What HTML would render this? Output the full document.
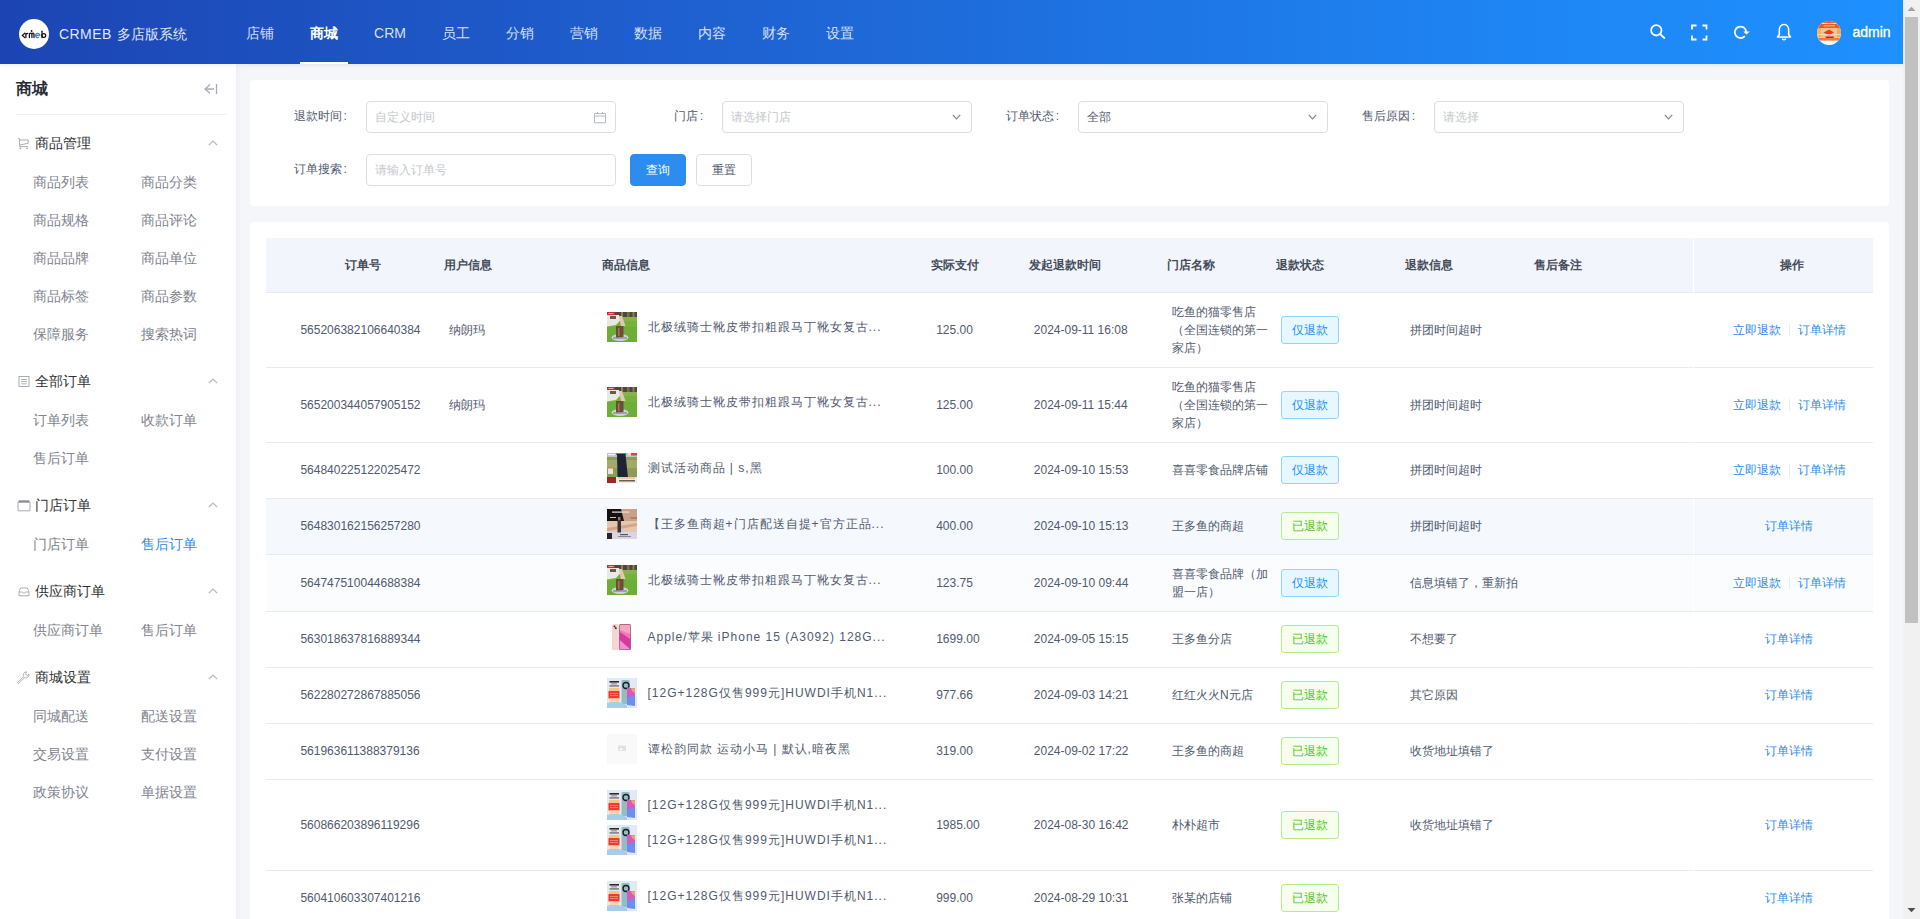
<!DOCTYPE html><html><head><meta charset="utf-8"><title>CRMEB</title><style>
*{margin:0;padding:0;box-sizing:border-box}
html,body{width:1920px;height:919px;overflow:hidden}
body{font-family:"Liberation Sans",sans-serif;background:#f5f6f9;position:relative;color:#515a6e;font-size:12px}
.ab{position:absolute;white-space:nowrap}
.hdr{position:absolute;left:0;top:0;width:1903px;height:64px;z-index:5;box-shadow:0 1px 4px rgba(0,21,41,.08);background:linear-gradient(90deg,#1c45b3 0%,#1f5fcf 35%,#1e86f4 80%,#1e90ff 100%)}
.nav{position:absolute;top:2px;height:62px;line-height:62px;font-size:14px;color:rgba(255,255,255,.82);text-align:center}
.nav.on{color:#fff;font-weight:bold}
.side{position:absolute;left:0;top:64px;width:236px;height:855px;background:#fff;box-shadow:2px 0 4px rgba(0,21,41,.035)}
.gt{position:absolute;left:35px;font-size:14px;color:#303133;line-height:20px}
.si{position:absolute;font-size:14px;color:#80848e;line-height:20px}
.card{position:absolute;background:#fff;border-radius:4px}
.lbl{position:absolute;font-size:12px;color:#515a6e;line-height:16px}
.inp{position:absolute;height:32px;width:250px;border:1px solid #dcdee2;border-radius:4px;background:#fff}
.ph{position:absolute;left:7.5px;top:-0.5px;line-height:30px;font-size:12px;color:#c5c8ce}
.btn{position:absolute;height:32px;width:56px;border-radius:4px;text-align:center;line-height:30px;font-size:12px}
.th{position:absolute;font-size:12px;font-weight:bold;color:#454b59;line-height:16px}
.td{position:absolute;font-size:12px;color:#515a6e;line-height:18px;white-space:nowrap}
.pn{letter-spacing:1px}
.tag{position:absolute;width:58px;height:28px;border:1px solid;border-radius:3px;text-align:center;line-height:26px;font-size:12px}
.tb{background:#e6f7ff;border-color:#91d5ff;color:#1890ff}
.tg{background:#f6ffed;border-color:#b7eb8f;color:#52c41a}
.lk{position:absolute;font-size:12px;color:#2d8cf0;line-height:18px;white-space:nowrap}
.img{position:absolute;width:30px;height:30px;overflow:hidden}
</style></head><body>
<div class="hdr">
<div class="ab" style="left:19px;top:19px;width:30px;height:30px;border-radius:50%;background:#fff"></div>
<svg class="ab" style="left:17px;top:17px" width="34" height="34" viewBox="0 0 34 34"><g fill="none" stroke="#111" stroke-width="1.25" stroke-linecap="round"><path d="M7.8 16.2L5.4 18.4L7.8 20.6"/><path d="M8.9 20.6V16.4M8.9 17.8Q9.6 16.2 10.9 16.3"/><path d="M12.4 20.6V17.4Q12.4 16.2 13.8 16.2Q14.9 16.2 14.9 17.4V20.6M14.9 17.4Q14.9 16.2 16 16.2Q17 16.2 17 17.4V20.6"/><path d="M25 14.2V20.6"/><circle cx="26.8" cy="18.5" r="1.9"/></g><circle cx="14.6" cy="14" r="0.9" fill="#111"/><path d="M18.8 18.4H22.8A2.1 2.1 0 1 0 22 20.1" fill="none" stroke="#2d8cf0" stroke-width="1.3"/></svg>
<div class="ab" style="left:59px;top:23.5px;font-size:14px;line-height:20px;color:rgba(255,255,255,.88)"><span style="letter-spacing:0.45px">CRMEB</span><span style="margin-left:1px"> 多店版系统</span></div>
<div class="nav" style="left:228px;width:64px">店铺</div>
<div class="nav on" style="left:292px;width:64px">商城</div>
<div class="nav" style="left:356px;width:68px">CRM</div>
<div class="nav" style="left:424px;width:64px">员工</div>
<div class="nav" style="left:488px;width:64px">分销</div>
<div class="nav" style="left:552px;width:64px">营销</div>
<div class="nav" style="left:616px;width:64px">数据</div>
<div class="nav" style="left:680px;width:64px">内容</div>
<div class="nav" style="left:744px;width:64px">财务</div>
<div class="nav" style="left:808px;width:64px">设置</div>
<div class="ab" style="left:300px;top:62px;width:48px;height:2px;background:#fff"></div>
<svg class="ab" style="left:1650px;top:24px" width="16" height="15" viewBox="0 0 16 15"><circle cx="6.3" cy="6.3" r="5.2" fill="none" stroke="#fff" stroke-width="1.8" stroke-linecap="round"/><path d="M10.2 10.2 L14.3 14" fill="none" stroke="#fff" stroke-width="1.8" stroke-linecap="round"/></svg>
<svg class="ab" style="left:1691px;top:24px" width="17" height="17" viewBox="0 0 17 17"><path d="M1 5.5V1.5H5.5M11.5 1.5H15.5V5.5M15.5 11.5V15.5H11.5M5.5 15.5H1V11.5" fill="none" stroke="#fff" stroke-width="1.8"/></svg>
<svg class="ab" style="left:1732px;top:24px" width="20" height="18" viewBox="0 0 20 18"><path d="M12.8 12.04A5.7 5.7 0 1 1 14.18 7.9" fill="none" stroke="#fff" stroke-width="1.8"/><path d="M11.3 7.4H17.8L14.5 10.6Z" fill="#fff"/></svg>
<svg class="ab" style="left:1776px;top:23px" width="16" height="18" viewBox="0 0 16 18"><path d="M8 1.5C5 1.5 3.3 4 3.3 7V11.5L1.5 14H14.5L12.7 11.5V7C12.7 4 11 1.5 8 1.5Z" fill="none" stroke="#fff" stroke-width="1.6" stroke-linejoin="round"/><path d="M6.3 15.5A1.8 1.8 0 0 0 9.7 15.5" fill="none" stroke="#fff" stroke-width="1.6"/></svg>
<svg class="ab" style="left:1817px;top:21px" width="24" height="24" viewBox="0 0 24 24"><defs><clipPath id="av"><circle cx="12" cy="12" r="12"/></clipPath></defs><g clip-path="url(#av)"><rect width="24" height="24" fill="#fff"/><rect width="24" height="19.5" fill="#f7c48e"/><rect width="24" height="7" fill="#ee5634"/><rect x="4" y="2" width="16" height="1" fill="#f9d8cc"/><rect x="6.5" y="4" width="11.5" height="1.6" fill="#f6a83a"/><rect x="0" y="7" width="4" height="9" fill="#f6b458"/><rect x="20" y="7" width="4" height="9" fill="#f4a860"/><path d="M6.5 11.5L12 8.5L17 11.5L12 14.5Z" fill="#ec3a2c"/><path d="M8.5 15.5H17L16.5 17H9Z" fill="#e5121c"/><rect y="17" width="24" height="2.5" fill="#f07a4c"/><rect y="13" width="24" height="1" fill="#fae6d6" opacity=".7"/></g></svg>
<div class="ab" style="left:1852.5px;top:22px;font-size:14px;line-height:20px;color:#fff;-webkit-text-stroke:0.35px #fff">admin</div>
</div>
<div class="side">
<div class="ab" style="left:16px;top:14px;font-size:16px;line-height:22px;font-weight:bold;color:#2a2e36">商城</div>
<svg class="ab" style="left:203px;top:19px" width="15" height="12" viewBox="0 0 15 12"><path d="M7 1.5L2 6L7 10.5M2 6H11M13.5 1V11" fill="none" stroke="#a6abb8" stroke-width="1.3"/></svg>
<div class="ab" style="left:16px;top:50px;width:210px;height:1px;background:#eeeff2"></div>
</div>
<div class="gt" style="left:35px;top:132.7px;">商品管理</div>
<svg class="ab" style="left:208px;top:140px" width="10" height="6" viewBox="0 0 10 6"><path d="M0.8 5.2L5 1L9.2 5.2" fill="none" stroke="#b4b8c2" stroke-width="1.2"/></svg>
<svg class="ab" style="left:17px;top:136.5px" width="13" height="13" viewBox="0 0 13 13"><path d="M1 1.2L2.6 1.8V9.6H11M2.6 3H11.2V6.3L2.6 8" fill="none" stroke="#a0a4ad" stroke-width="0.9"/><circle cx="3.4" cy="11.3" r="0.9" fill="#a0a4ad"/><circle cx="10" cy="11.3" r="0.9" fill="#a0a4ad"/></svg>
<div class="gt" style="left:35px;top:370.7px;">全部订单</div>
<svg class="ab" style="left:208px;top:378px" width="10" height="6" viewBox="0 0 10 6"><path d="M0.8 5.2L5 1L9.2 5.2" fill="none" stroke="#b4b8c2" stroke-width="1.2"/></svg>
<svg class="ab" style="left:17.5px;top:374.5px" width="12" height="13" viewBox="0 0 12 13"><rect x="1" y="1.5" width="10" height="10" fill="none" stroke="#a0a4ad" stroke-width="0.9"/><path d="M3 4.5H9M3 6.6H9M3 8.8H9" stroke="#a0a4ad" stroke-width="0.8"/></svg>
<div class="gt" style="left:35px;top:494.7px;">门店订单</div>
<svg class="ab" style="left:208px;top:502px" width="10" height="6" viewBox="0 0 10 6"><path d="M0.8 5.2L5 1L9.2 5.2" fill="none" stroke="#b4b8c2" stroke-width="1.2"/></svg>
<svg class="ab" style="left:16.5px;top:498.5px" width="14" height="13" viewBox="0 0 14 13"><path d="M1 3.3H13V11.8H1Z" fill="none" stroke="#a0a4ad" stroke-width="0.9"/><path d="M2.2 1.2H11.8L13 3.3H1Z" fill="#8c9099"/></svg>
<div class="gt" style="left:35px;top:580.7px;">供应商订单</div>
<svg class="ab" style="left:208px;top:588px" width="10" height="6" viewBox="0 0 10 6"><path d="M0.8 5.2L5 1L9.2 5.2" fill="none" stroke="#b4b8c2" stroke-width="1.2"/></svg>
<svg class="ab" style="left:17.5px;top:584.5px" width="12" height="13" viewBox="0 0 12 13"><path d="M2.6 3H9.4L11 7V10.8H1V7Z" fill="none" stroke="#a0a4ad" stroke-width="0.9"/><path d="M1 7H4.2L6 8.3L7.8 7H11" fill="none" stroke="#a0a4ad" stroke-width="0.8"/></svg>
<div class="gt" style="left:35px;top:666.7px;">商城设置</div>
<svg class="ab" style="left:208px;top:674px" width="10" height="6" viewBox="0 0 10 6"><path d="M0.8 5.2L5 1L9.2 5.2" fill="none" stroke="#b4b8c2" stroke-width="1.2"/></svg>
<svg class="ab" style="left:17px;top:670.5px" width="13" height="13" viewBox="0 0 13 13"><path d="M0.9 11.3L6.6 5.6A3.2 3.2 0 0 1 9.9 0.9L8.6 2.3L9 3.8L10.6 4.3L12 3A3.2 3.2 0 0 1 7.6 6.6L2 12.3Q1.4 12.9 0.9 12.3Q0.3 11.8 0.9 11.3Z" fill="none" stroke="#a0a4ad" stroke-width="0.85" stroke-linejoin="round"/></svg>
<div class="si" style="left:33px;top:171.7px;">商品列表</div>
<div class="si" style="left:141px;top:171.7px;">商品分类</div>
<div class="si" style="left:33px;top:209.7px;">商品规格</div>
<div class="si" style="left:141px;top:209.7px;">商品评论</div>
<div class="si" style="left:33px;top:247.7px;">商品品牌</div>
<div class="si" style="left:141px;top:247.7px;">商品单位</div>
<div class="si" style="left:33px;top:285.7px;">商品标签</div>
<div class="si" style="left:141px;top:285.7px;">商品参数</div>
<div class="si" style="left:33px;top:323.7px;">保障服务</div>
<div class="si" style="left:141px;top:323.7px;">搜索热词</div>
<div class="si" style="left:33px;top:409.7px;">订单列表</div>
<div class="si" style="left:141px;top:409.7px;">收款订单</div>
<div class="si" style="left:33px;top:447.7px;">售后订单</div>
<div class="si" style="left:33px;top:533.7px;">门店订单</div>
<div class="si" style="left:141px;top:533.7px;color:#2d8cf0">售后订单</div>
<div class="si" style="left:33px;top:619.7px;">供应商订单</div>
<div class="si" style="left:141px;top:619.7px;">售后订单</div>
<div class="si" style="left:33px;top:705.7px;">同城配送</div>
<div class="si" style="left:141px;top:705.7px;">配送设置</div>
<div class="si" style="left:33px;top:743.7px;">交易设置</div>
<div class="si" style="left:141px;top:743.7px;">支付设置</div>
<div class="si" style="left:33px;top:781.7px;">政策协议</div>
<div class="si" style="left:141px;top:781.7px;">单据设置</div>
<div class="card" style="left:250px;top:80px;width:1639px;height:126px"></div>
<div class="lbl" style="left:294px;top:107.6px">退款时间<span style="margin-left:1.5px">:</span></div>
<div class="lbl" style="left:674.4px;top:107.6px">门店<span style="margin-left:1.5px">:</span></div>
<div class="lbl" style="left:1006.2px;top:107.6px">订单状态<span style="margin-left:1.5px">:</span></div>
<div class="lbl" style="left:1362.2px;top:107.6px">售后原因<span style="margin-left:1.5px">:</span></div>
<div class="lbl" style="left:294px;top:161px">订单搜索<span style="margin-left:1.5px">:</span></div>
<div class="inp" style="left:366px;top:101px"><div class="ph" style="color:#c5c8ce">自定义时间</div><svg class="ab" style="left:226px;top:9px" width="14" height="13" viewBox="0 0 14 13"><path d="M1.5 2.5H12.5V11.8H1.5Z M1.5 5H12.5M4.5 0.8V3M9.5 0.8V3" fill="none" stroke="#b5b9c2" stroke-width="1"/></svg></div>
<div class="inp" style="left:722px;top:101px"><div class="ph" style="color:#c5c8ce">请选择门店</div><svg class="ab" style="left:229px;top:12px" width="9" height="6" viewBox="0 0 9 6"><path d="M0.8 0.8L4.5 4.8L8.2 0.8" fill="none" stroke="#808695" stroke-width="1.2"/></svg></div>
<div class="inp" style="left:1078px;top:101px"><div class="ph" style="color:#515a6e">全部</div><svg class="ab" style="left:229px;top:12px" width="9" height="6" viewBox="0 0 9 6"><path d="M0.8 0.8L4.5 4.8L8.2 0.8" fill="none" stroke="#808695" stroke-width="1.2"/></svg></div>
<div class="inp" style="left:1434px;top:101px"><div class="ph" style="color:#c5c8ce">请选择</div><svg class="ab" style="left:229px;top:12px" width="9" height="6" viewBox="0 0 9 6"><path d="M0.8 0.8L4.5 4.8L8.2 0.8" fill="none" stroke="#808695" stroke-width="1.2"/></svg></div>
<div class="inp" style="left:366px;top:154px"><div class="ph" style="color:#c5c8ce">请输入订单号</div></div>
<div class="btn" style="left:630px;top:154px;background:#2d8cf0;color:#fff;border:1px solid #2d8cf0">查询</div>
<div class="btn" style="left:696px;top:154px;background:#fff;color:#515a6e;border:1px solid #dcdee2">重置</div>
<div class="card" style="left:250px;top:222px;width:1639px;height:720px"></div>
<div class="ab" style="left:266px;top:238px;width:1607px;height:54px;background:#f2f6fc"></div>
<div class="th" style="left:344.8px;top:256.6px">订单号</div>
<div class="th" style="left:444.2px;top:256.6px">用户信息</div>
<div class="th" style="left:602px;top:256.6px">商品信息</div>
<div class="th" style="left:930.6px;top:256.6px">实际支付</div>
<div class="th" style="left:1028.5px;top:256.6px">发起退款时间</div>
<div class="th" style="left:1166.7px;top:256.6px">门店名称</div>
<div class="th" style="left:1275.6px;top:256.6px">退款状态</div>
<div class="th" style="left:1404.8px;top:256.6px">退款信息</div>
<div class="th" style="left:1534px;top:256.6px">售后备注</div>
<div class="th" style="left:1779.6px;top:256.6px">操作</div>
<div class="ab" style="left:266px;top:367px;width:1607px;height:1px;background:#e8eaec"></div>
<div class="td" style="left:300.4px;top:320.5px">565206382106640384</div>
<div class="td" style="left:448.7px;top:320.5px">纳朗玛</div>
<div class="img" style="left:607px;top:312px"><svg width="30" height="30" viewBox="0 0 30 30"><rect width="30" height="30" fill="#74b23e"/><rect y="0" width="30" height="5" fill="#4c4a36"/><rect x="14" y="0" width="2" height="5" fill="#8e7e62"/><rect x="20" y="0" width="2.5" height="5" fill="#7e6e52"/><rect x="25.5" y="0" width="2" height="5" fill="#8a7a5e"/><rect y="5" width="30" height="4" fill="#86b44c"/><rect y="15" width="30" height="15" fill="#6cae38"/><path d="M0 3H12L13.5 8L9 13L0 14.5Z" fill="#e9e9e4"/><rect x="3" y="4" width="6" height="3" fill="#6a5a48"/><rect x="0" y="0" width="8" height="3" fill="#d8262c"/><rect x="1.5" y="1.2" width="5" height="0.8" fill="#f6c8c8"/><path d="M12 4H15L18.5 14H14Z" fill="#e6c6ae"/><ellipse cx="13" cy="25.5" rx="8.5" ry="3.5" fill="#cdd1da"/><path d="M6 25H20V27H6Z" fill="#6a7488" opacity=".5"/><path d="M9 14H16.5V25L9 25.5Z" fill="#6e4c36"/><rect x="11" y="16" width="1.5" height="8" fill="#9a7a5c"/></svg></div>
<div class="td pn" style="left:647.5px;top:318.0px">北极绒骑士靴皮带扣粗跟马丁靴女复古...</div>
<div class="td" style="left:936.2px;top:320.5px">125.00</div>
<div class="td" style="left:1033.8px;top:320.5px">2024-09-11 16:08</div>
<div class="td" style="left:1172px;top:302.5px">吃鱼的猫零售店<br>（全国连锁的第一<br>家店）</div>
<div class="tag tb" style="left:1281px;top:315.5px">仅退款</div>
<div class="td" style="left:1410px;top:320.5px">拼团时间超时</div>
<div class="lk" style="left:1732.8px;top:320.5px">立即退款</div>
<div class="ab" style="left:1789px;top:324.0px;width:1px;height:12px;background:#e8eaec"></div>
<div class="lk" style="left:1798px;top:320.5px">订单详情</div>
<div class="ab" style="left:266px;top:442px;width:1607px;height:1px;background:#e8eaec"></div>
<div class="td" style="left:300.4px;top:395.5px">565200344057905152</div>
<div class="td" style="left:448.7px;top:395.5px">纳朗玛</div>
<div class="img" style="left:607px;top:387px"><svg width="30" height="30" viewBox="0 0 30 30"><rect width="30" height="30" fill="#74b23e"/><rect y="0" width="30" height="5" fill="#4c4a36"/><rect x="14" y="0" width="2" height="5" fill="#8e7e62"/><rect x="20" y="0" width="2.5" height="5" fill="#7e6e52"/><rect x="25.5" y="0" width="2" height="5" fill="#8a7a5e"/><rect y="5" width="30" height="4" fill="#86b44c"/><rect y="15" width="30" height="15" fill="#6cae38"/><path d="M0 3H12L13.5 8L9 13L0 14.5Z" fill="#e9e9e4"/><rect x="3" y="4" width="6" height="3" fill="#6a5a48"/><rect x="0" y="0" width="8" height="3" fill="#d8262c"/><rect x="1.5" y="1.2" width="5" height="0.8" fill="#f6c8c8"/><path d="M12 4H15L18.5 14H14Z" fill="#e6c6ae"/><ellipse cx="13" cy="25.5" rx="8.5" ry="3.5" fill="#cdd1da"/><path d="M6 25H20V27H6Z" fill="#6a7488" opacity=".5"/><path d="M9 14H16.5V25L9 25.5Z" fill="#6e4c36"/><rect x="11" y="16" width="1.5" height="8" fill="#9a7a5c"/></svg></div>
<div class="td pn" style="left:647.5px;top:393.0px">北极绒骑士靴皮带扣粗跟马丁靴女复古...</div>
<div class="td" style="left:936.2px;top:395.5px">125.00</div>
<div class="td" style="left:1033.8px;top:395.5px">2024-09-11 15:44</div>
<div class="td" style="left:1172px;top:377.5px">吃鱼的猫零售店<br>（全国连锁的第一<br>家店）</div>
<div class="tag tb" style="left:1281px;top:390.5px">仅退款</div>
<div class="td" style="left:1410px;top:395.5px">拼团时间超时</div>
<div class="lk" style="left:1732.8px;top:395.5px">立即退款</div>
<div class="ab" style="left:1789px;top:399.0px;width:1px;height:12px;background:#e8eaec"></div>
<div class="lk" style="left:1798px;top:395.5px">订单详情</div>
<div class="ab" style="left:266px;top:498px;width:1607px;height:1px;background:#e8eaec"></div>
<div class="td" style="left:300.4px;top:461.0px">564840225122025472</div>
<div class="img" style="left:607px;top:453px"><svg width="30" height="30" viewBox="0 0 30 30"><rect width="30" height="30" fill="#8e9c5a"/><rect y="7" width="30" height="8" fill="#a2ac6a"/><rect width="30" height="4" fill="#b8c6d2"/><rect x="1" y="1" width="7" height="1.2" fill="#f2f2f2"/><rect x="9" y="0" width="10" height="2" fill="#3a9a7a"/><rect x="21" y="0" width="3" height="2.5" fill="#f0dcc0"/><rect x="24" y="0" width="6" height="2.5" fill="#d84a3a"/><path d="M10 1H18.5L21 25L14 26L10.5 24Z" fill="#1f2335"/><rect x="1" y="14" width="5" height="7" fill="#efe4d6"/><rect x="1" y="14" width="5" height="1.5" fill="#e07a6a"/><rect x="0" y="24" width="9" height="6" fill="#9a2a22"/><rect x="9" y="24" width="21" height="6" fill="#f4ecd8"/><rect x="11" y="24.5" width="17" height="1" fill="#e8a090"/><rect x="12" y="27" width="16" height="1.5" fill="#6a5e56"/></svg></div>
<div class="td pn" style="left:647.5px;top:458.5px">测试活动商品 | s,黑</div>
<div class="td" style="left:936.2px;top:461.0px">100.00</div>
<div class="td" style="left:1033.8px;top:461.0px">2024-09-10 15:53</div>
<div class="td" style="left:1172px;top:461.0px">喜喜零食品牌店铺</div>
<div class="tag tb" style="left:1281px;top:456.0px">仅退款</div>
<div class="td" style="left:1410px;top:461.0px">拼团时间超时</div>
<div class="lk" style="left:1732.8px;top:461.0px">立即退款</div>
<div class="ab" style="left:1789px;top:464.5px;width:1px;height:12px;background:#e8eaec"></div>
<div class="lk" style="left:1798px;top:461.0px">订单详情</div>
<div class="ab" style="left:266px;top:499px;width:1607px;height:55px;background:#f5f8fd"></div>
<div class="ab" style="left:266px;top:554px;width:1607px;height:1px;background:#e8eaec"></div>
<div class="td" style="left:300.4px;top:517.0px">564830162156257280</div>
<div class="img" style="left:607px;top:509px"><svg width="30" height="30" viewBox="0 0 30 30"><rect width="30" height="30" fill="#e6c2a8"/><rect width="30" height="12" fill="#161214"/><path d="M14 0H30V12H17Z" fill="#caa08a"/><path d="M23 8H30V10H24Z" fill="#b87a6a"/><rect x="5" y="2.5" width="17" height="1.2" fill="#e8e2e0"/><rect x="3" y="8" width="6" height="1" fill="#cfc8c8"/><path d="M0 12H30V23H0Z" fill="#e8c6ae"/><path d="M0 19L30 14V17L0 22Z" fill="#d2a68a"/><rect x="0" y="23" width="30" height="7" fill="#d9d6e3"/><rect x="0" y="24" width="5" height="6" fill="#2a2230"/><rect x="13" y="25" width="8" height="1.2" fill="#555"/><rect x="11" y="27" width="13" height="1" fill="#888"/><rect x="11" y="8" width="2.5" height="3.5" fill="#b86a5a"/><rect x="10.5" y="11.5" width="3.5" height="12" fill="#3a3438"/><rect x="14" y="20" width="3" height="3.5" fill="#c8ccd8"/></svg></div>
<div class="td pn" style="left:647.5px;top:514.5px">【王多鱼商超+门店配送自提+官方正品...</div>
<div class="td" style="left:936.2px;top:517.0px">400.00</div>
<div class="td" style="left:1033.8px;top:517.0px">2024-09-10 15:13</div>
<div class="td" style="left:1172px;top:517.0px">王多鱼的商超</div>
<div class="tag tg" style="left:1281px;top:512.0px">已退款</div>
<div class="td" style="left:1410px;top:517.0px">拼团时间超时</div>
<div class="lk" style="left:1765px;top:517.0px">订单详情</div>
<div class="ab" style="left:266px;top:555px;width:1607px;height:56px;background:#fbfcfe"></div>
<div class="ab" style="left:266px;top:611px;width:1607px;height:1px;background:#e8eaec"></div>
<div class="td" style="left:300.4px;top:573.5px">564747510044688384</div>
<div class="img" style="left:607px;top:565px"><svg width="30" height="30" viewBox="0 0 30 30"><rect width="30" height="30" fill="#74b23e"/><rect y="0" width="30" height="5" fill="#4c4a36"/><rect x="14" y="0" width="2" height="5" fill="#8e7e62"/><rect x="20" y="0" width="2.5" height="5" fill="#7e6e52"/><rect x="25.5" y="0" width="2" height="5" fill="#8a7a5e"/><rect y="5" width="30" height="4" fill="#86b44c"/><rect y="15" width="30" height="15" fill="#6cae38"/><path d="M0 3H12L13.5 8L9 13L0 14.5Z" fill="#e9e9e4"/><rect x="3" y="4" width="6" height="3" fill="#6a5a48"/><rect x="0" y="0" width="8" height="3" fill="#d8262c"/><rect x="1.5" y="1.2" width="5" height="0.8" fill="#f6c8c8"/><path d="M12 4H15L18.5 14H14Z" fill="#e6c6ae"/><ellipse cx="13" cy="25.5" rx="8.5" ry="3.5" fill="#cdd1da"/><path d="M6 25H20V27H6Z" fill="#6a7488" opacity=".5"/><path d="M9 14H16.5V25L9 25.5Z" fill="#6e4c36"/><rect x="11" y="16" width="1.5" height="8" fill="#9a7a5c"/></svg></div>
<div class="td pn" style="left:647.5px;top:571.0px">北极绒骑士靴皮带扣粗跟马丁靴女复古...</div>
<div class="td" style="left:936.2px;top:573.5px">123.75</div>
<div class="td" style="left:1033.8px;top:573.5px">2024-09-10 09:44</div>
<div class="td" style="left:1172px;top:564.5px">喜喜零食品牌（加<br>盟一店）</div>
<div class="tag tb" style="left:1281px;top:568.5px">仅退款</div>
<div class="td" style="left:1410px;top:573.5px">信息填错了，重新拍</div>
<div class="lk" style="left:1732.8px;top:573.5px">立即退款</div>
<div class="ab" style="left:1789px;top:577.0px;width:1px;height:12px;background:#e8eaec"></div>
<div class="lk" style="left:1798px;top:573.5px">订单详情</div>
<div class="ab" style="left:266px;top:667px;width:1607px;height:1px;background:#e8eaec"></div>
<div class="td" style="left:300.4px;top:630.0px">563018637816889344</div>
<div class="img" style="left:607px;top:622px"><svg width="30" height="30" viewBox="0 0 30 30"><rect width="30" height="30" fill="#fff"/><rect x="5" y="2" width="7" height="26" rx="1.5" fill="#f4d6d4"/><circle cx="7.5" cy="4.5" r="1" fill="#3a3038"/><circle cx="8.8" cy="6.3" r="1" fill="#3a3038"/><rect x="12" y="2" width="12" height="26" rx="1.5" fill="#8a6a70"/><rect x="12.8" y="2.8" width="10.4" height="24.4" rx="1" fill="#f07ab8"/><path d="M12.8 10L23.2 17V27.2H12.8Z" fill="#d63aa0"/><path d="M12.8 3L23.2 3V12L12.8 8Z" fill="#f8a6c4"/><path d="M12.8 18L23.2 27.2H12.8Z" fill="#f090d8"/></svg></div>
<div class="td pn" style="left:647.5px;top:627.5px">Apple/苹果 iPhone 15 (A3092) 128G...</div>
<div class="td" style="left:936.2px;top:630.0px">1699.00</div>
<div class="td" style="left:1033.8px;top:630.0px">2024-09-05 15:15</div>
<div class="td" style="left:1172px;top:630.0px">王多鱼分店</div>
<div class="tag tg" style="left:1281px;top:625.0px">已退款</div>
<div class="td" style="left:1410px;top:630.0px">不想要了</div>
<div class="lk" style="left:1765px;top:630.0px">订单详情</div>
<div class="ab" style="left:266px;top:723px;width:1607px;height:1px;background:#e8eaec"></div>
<div class="td" style="left:300.4px;top:686.0px">562280272867885056</div>
<div class="img" style="left:607px;top:678px"><svg width="30" height="30" viewBox="0 0 30 30"><rect width="30" height="30" fill="#dfeaf5"/><rect x="2.5" y="3" width="9.5" height="1.6" fill="#2a2a2a"/><rect x="4" y="5.5" width="6" height="0.8" fill="#c84040"/><rect x="2.5" y="7.5" width="9.5" height="0.9" fill="#333"/><rect x="2" y="10" width="10.5" height="3" fill="#f7c490"/><rect x="1.5" y="13" width="11" height="7.5" fill="#ef3b2c"/><rect x="3" y="15" width="8" height="0.6" fill="#f8b0a0"/><rect x="3" y="17" width="8" height="0.6" fill="#f8b0a0"/><rect x="2.5" y="20.5" width="9.5" height="4" fill="#fbd6ac"/><rect x="2" y="24.5" width="10.5" height="1.5" fill="#f2966a"/><rect x="14.5" y="2" width="8" height="24" rx="1" fill="#93bcc8"/><circle cx="19" cy="7.5" r="3" fill="none" stroke="#1e1e1e" stroke-width="1.4"/><path d="M20 9.5L28 10.5V28L20 27Z" fill="#6b8ef0"/><path d="M20 9.5L28 10.5V17L20 20Z" fill="#d65ab6"/><path d="M24 10L28 10.5V15L25 13Z" fill="#f0a070"/><path d="M0 25Q12 22.5 20 27V30H0Z" fill="#a8cdec"/></svg></div>
<div class="td pn" style="left:647.5px;top:683.5px">[12G+128G仅售999元]HUWDI手机N1...</div>
<div class="td" style="left:936.2px;top:686.0px">977.66</div>
<div class="td" style="left:1033.8px;top:686.0px">2024-09-03 14:21</div>
<div class="td" style="left:1172px;top:686.0px">红红火火N元店</div>
<div class="tag tg" style="left:1281px;top:681.0px">已退款</div>
<div class="td" style="left:1410px;top:686.0px">其它原因</div>
<div class="lk" style="left:1765px;top:686.0px">订单详情</div>
<div class="ab" style="left:266px;top:779px;width:1607px;height:1px;background:#e8eaec"></div>
<div class="td" style="left:300.4px;top:742.0px">561963611388379136</div>
<div class="img" style="left:607px;top:734px"><svg width="30" height="30" viewBox="0 0 30 30"><rect width="30" height="30" fill="#f9f9f9"/><path d="M11 11.5H19V17H11Z" fill="#e2e2e2"/><path d="M12 16L14 14L16 16Z" fill="#fff"/></svg></div>
<div class="td pn" style="left:647.5px;top:739.5px">谭松韵同款 运动小马 | 默认,暗夜黑</div>
<div class="td" style="left:936.2px;top:742.0px">319.00</div>
<div class="td" style="left:1033.8px;top:742.0px">2024-09-02 17:22</div>
<div class="td" style="left:1172px;top:742.0px">王多鱼的商超</div>
<div class="tag tg" style="left:1281px;top:737.0px">已退款</div>
<div class="td" style="left:1410px;top:742.0px">收货地址填错了</div>
<div class="lk" style="left:1765px;top:742.0px">订单详情</div>
<div class="ab" style="left:266px;top:870px;width:1607px;height:1px;background:#e8eaec"></div>
<div class="td" style="left:300.4px;top:815.5px">560866203896119296</div>
<div class="img" style="left:607px;top:790px"><svg width="30" height="30" viewBox="0 0 30 30"><rect width="30" height="30" fill="#dfeaf5"/><rect x="2.5" y="3" width="9.5" height="1.6" fill="#2a2a2a"/><rect x="4" y="5.5" width="6" height="0.8" fill="#c84040"/><rect x="2.5" y="7.5" width="9.5" height="0.9" fill="#333"/><rect x="2" y="10" width="10.5" height="3" fill="#f7c490"/><rect x="1.5" y="13" width="11" height="7.5" fill="#ef3b2c"/><rect x="3" y="15" width="8" height="0.6" fill="#f8b0a0"/><rect x="3" y="17" width="8" height="0.6" fill="#f8b0a0"/><rect x="2.5" y="20.5" width="9.5" height="4" fill="#fbd6ac"/><rect x="2" y="24.5" width="10.5" height="1.5" fill="#f2966a"/><rect x="14.5" y="2" width="8" height="24" rx="1" fill="#93bcc8"/><circle cx="19" cy="7.5" r="3" fill="none" stroke="#1e1e1e" stroke-width="1.4"/><path d="M20 9.5L28 10.5V28L20 27Z" fill="#6b8ef0"/><path d="M20 9.5L28 10.5V17L20 20Z" fill="#d65ab6"/><path d="M24 10L28 10.5V15L25 13Z" fill="#f0a070"/><path d="M0 25Q12 22.5 20 27V30H0Z" fill="#a8cdec"/></svg></div>
<div class="td pn" style="left:647.5px;top:795.5px">[12G+128G仅售999元]HUWDI手机N1...</div>
<div class="img" style="left:607px;top:825px"><svg width="30" height="30" viewBox="0 0 30 30"><rect width="30" height="30" fill="#dfeaf5"/><rect x="2.5" y="3" width="9.5" height="1.6" fill="#2a2a2a"/><rect x="4" y="5.5" width="6" height="0.8" fill="#c84040"/><rect x="2.5" y="7.5" width="9.5" height="0.9" fill="#333"/><rect x="2" y="10" width="10.5" height="3" fill="#f7c490"/><rect x="1.5" y="13" width="11" height="7.5" fill="#ef3b2c"/><rect x="3" y="15" width="8" height="0.6" fill="#f8b0a0"/><rect x="3" y="17" width="8" height="0.6" fill="#f8b0a0"/><rect x="2.5" y="20.5" width="9.5" height="4" fill="#fbd6ac"/><rect x="2" y="24.5" width="10.5" height="1.5" fill="#f2966a"/><rect x="14.5" y="2" width="8" height="24" rx="1" fill="#93bcc8"/><circle cx="19" cy="7.5" r="3" fill="none" stroke="#1e1e1e" stroke-width="1.4"/><path d="M20 9.5L28 10.5V28L20 27Z" fill="#6b8ef0"/><path d="M20 9.5L28 10.5V17L20 20Z" fill="#d65ab6"/><path d="M24 10L28 10.5V15L25 13Z" fill="#f0a070"/><path d="M0 25Q12 22.5 20 27V30H0Z" fill="#a8cdec"/></svg></div>
<div class="td pn" style="left:647.5px;top:830.5px">[12G+128G仅售999元]HUWDI手机N1...</div>
<div class="td" style="left:936.2px;top:815.5px">1985.00</div>
<div class="td" style="left:1033.8px;top:815.5px">2024-08-30 16:42</div>
<div class="td" style="left:1172px;top:815.5px">朴朴超市</div>
<div class="tag tg" style="left:1281px;top:810.5px">已退款</div>
<div class="td" style="left:1410px;top:815.5px">收货地址填错了</div>
<div class="lk" style="left:1765px;top:815.5px">订单详情</div>
<div class="ab" style="left:266px;top:926px;width:1607px;height:1px;background:#e8eaec"></div>
<div class="td" style="left:300.4px;top:889.0px">560410603307401216</div>
<div class="img" style="left:607px;top:881px"><svg width="30" height="30" viewBox="0 0 30 30"><rect width="30" height="30" fill="#dfeaf5"/><rect x="2.5" y="3" width="9.5" height="1.6" fill="#2a2a2a"/><rect x="4" y="5.5" width="6" height="0.8" fill="#c84040"/><rect x="2.5" y="7.5" width="9.5" height="0.9" fill="#333"/><rect x="2" y="10" width="10.5" height="3" fill="#f7c490"/><rect x="1.5" y="13" width="11" height="7.5" fill="#ef3b2c"/><rect x="3" y="15" width="8" height="0.6" fill="#f8b0a0"/><rect x="3" y="17" width="8" height="0.6" fill="#f8b0a0"/><rect x="2.5" y="20.5" width="9.5" height="4" fill="#fbd6ac"/><rect x="2" y="24.5" width="10.5" height="1.5" fill="#f2966a"/><rect x="14.5" y="2" width="8" height="24" rx="1" fill="#93bcc8"/><circle cx="19" cy="7.5" r="3" fill="none" stroke="#1e1e1e" stroke-width="1.4"/><path d="M20 9.5L28 10.5V28L20 27Z" fill="#6b8ef0"/><path d="M20 9.5L28 10.5V17L20 20Z" fill="#d65ab6"/><path d="M24 10L28 10.5V15L25 13Z" fill="#f0a070"/><path d="M0 25Q12 22.5 20 27V30H0Z" fill="#a8cdec"/></svg></div>
<div class="td pn" style="left:647.5px;top:886.5px">[12G+128G仅售999元]HUWDI手机N1...</div>
<div class="td" style="left:936.2px;top:889.0px">999.00</div>
<div class="td" style="left:1033.8px;top:889.0px">2024-08-29 10:31</div>
<div class="td" style="left:1172px;top:889.0px">张某的店铺</div>
<div class="tag tg" style="left:1281px;top:884.0px">已退款</div>
<div class="lk" style="left:1765px;top:889.0px">订单详情</div>
<div class="ab" style="left:266px;top:292px;width:1607px;height:1px;background:#e8eaec"></div>
<div class="ab" style="left:1693px;top:238px;width:1px;height:700px;background:#fff"></div>
<div class="ab" style="left:1903px;top:0;width:17px;height:919px;background:#f1f1f1"></div>
<div class="ab" style="left:1905px;top:17px;width:13px;height:606px;background:#c1c1c1"></div>
<svg class="ab" style="left:1907px;top:6px" width="9" height="6" viewBox="0 0 9 6"><path d="M0.5 5L4.5 0.8L8.5 5Z" fill="#a3a3a3"/></svg>
<svg class="ab" style="left:1907px;top:907px" width="9" height="6" viewBox="0 0 9 6"><path d="M0.5 1L4.5 5.2L8.5 1Z" fill="#505050"/></svg>
</body></html>
